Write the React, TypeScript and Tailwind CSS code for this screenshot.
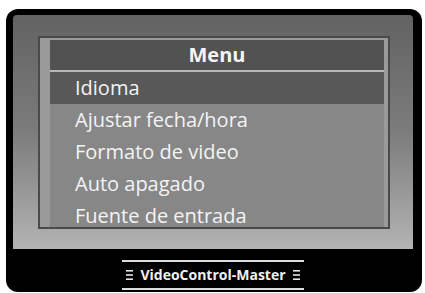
import React from 'react'

const items = ['Idioma', 'Ajustar fecha/hora', 'Formato de video', 'Auto apagado', 'Fuente de entrada']

const Dashes = () => (
  <svg width="7" height="12" viewBox="0 0 7 12" className="shrink-0">
    <rect x="0" y="1" width="7" height="1.6" fill="#e5e5e5" />
    <rect x="0" y="5.2" width="7" height="1.6" fill="#e5e5e5" />
    <rect x="0" y="9.4" width="7" height="1.6" fill="#e5e5e5" />
  </svg>
)

export default function App() {
  return (
    <div className="w-[425px] h-[293px] bg-white overflow-hidden pl-[6px] pt-[9px]">
      <div className="w-[416px] h-[283px] bg-black rounded-[12px] pt-[6px] pl-[7px] pr-[9px] flex flex-col">
        {/* bezel */}
        <div className="h-[234px] rounded-t-[4px] bg-gradient-to-b from-[#626262] via-[#7c7c7c] to-[#b4b4b4] pt-[21px] pl-[25px] pr-[23px]">
          {/* screen */}
          <div className="h-[193px] border-2 border-[#4a4a4a] bg-[#9a9a9a] pl-[10px] pr-[4px] pt-[2px] overflow-hidden">
            <div className="h-full bg-[#878787] flex flex-col font-['Open_Sans',sans-serif] text-[#f4f4f4]">
              <div className="h-[30px] shrink-0 bg-[#525252] flex items-center justify-center text-[20px] font-bold leading-none">
                Menu
              </div>
              <div className="h-[2px] shrink-0 bg-[#b8b8b8]" />
              {items.map((item, i) => (
                <div
                  key={item}
                  className={`h-[32px] shrink-0 flex items-center pl-[25px] text-[20px] leading-none ${i === 0 ? 'bg-[#585858]' : ''}`}
                >
                  {item}
                </div>
              ))}
            </div>
          </div>
        </div>
        {/* label */}
        <div className="flex-1 flex justify-center pt-[11px]">
          <div className="w-[182px] flex flex-col">
            <div className="h-[2px] bg-[#dcdcdc]" />
            <div className="h-[26px] flex items-center justify-center gap-[7px]">
              <Dashes />
              <span className="font-['Open_Sans',sans-serif] font-bold text-[14px] text-[#f0f0f0] leading-none">
                VideoControl-Master
              </span>
              <Dashes />
            </div>
            <div className="h-[2px] bg-[#dcdcdc]" />
          </div>
        </div>
      </div>
    </div>
  )
}
